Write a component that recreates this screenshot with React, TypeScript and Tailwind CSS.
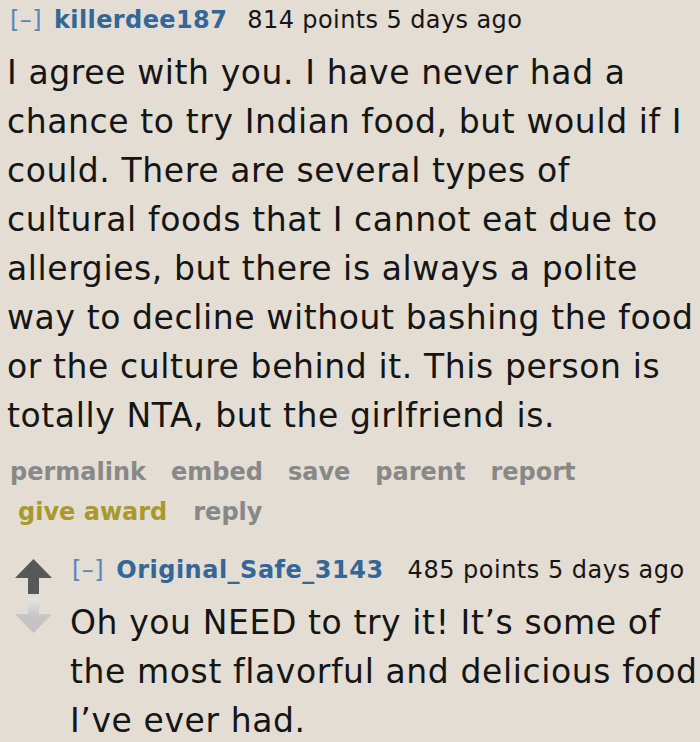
export default function App() {
  const font = { fontFamily: '"DejaVu Sans", Verdana, sans-serif' };
  return (
    <div className="w-[700px] h-[742px] overflow-hidden bg-[#e3ddd3] text-[#151515]" style={font}>
      <div className="pl-[8px] pt-[4px]">
        <div className="flex items-baseline text-[24px] leading-[32px] tracking-[0.4px] whitespace-nowrap">
          <span className="ml-[2px] text-[#5b86bb]">[–]</span>
          <span className="ml-[12px] font-bold text-[#336699]">killerdee187</span>
          <span className="ml-[20px]">814 points 5 days ago</span>
        </div>
        <p className="mt-[12px] text-[33px] leading-[49px] tracking-[0.6px] whitespace-nowrap -ml-[1px]">
          I agree with you. I have never had a<br />
          chance to try Indian food, but would if I<br />
          could. There are several types of<br />
          cultural foods that I cannot eat due to<br />
          allergies, but there is always a polite<br />
          way to decline without bashing the food<br />
          or the culture behind it. This person is<br />
          totally NTA, but the girlfriend is.
        </p>
        <div className="mt-[12px] text-[24px] font-bold leading-[40px] text-[#888888] whitespace-nowrap">
          <div className="flex gap-[25px] pl-[2px]">
            <span>permalink</span>
            <span>embed</span>
            <span>save</span>
            <span>parent</span>
            <span>report</span>
          </div>
          <div className="flex gap-[26px] pl-[10px]">
            <span className="text-[#a8982e]">give award</span>
            <span>reply</span>
          </div>
        </div>
      </div>
      <div className="flex mt-[22px] pl-[15px]">
        <div className="flex flex-col gap-[4px] pt-[5px] w-[37px]">
          <svg width="37" height="35" viewBox="0 0 37 35">
            <path d="M18.5 0 L37 19 L24 19 L24 35 L13 35 L13 19 L0 19 Z" fill="#585858" />
          </svg>
          <svg width="37" height="35" viewBox="0 0 37 35">
            <defs>
              <linearGradient id="dg" x1="0" y1="0" x2="0" y2="1">
                <stop offset="0" stopColor="#e6e6e6" />
                <stop offset="0.5" stopColor="#c6c6c6" />
                <stop offset="1" stopColor="#c0c0c0" />
              </linearGradient>
            </defs>
            <path d="M13 0 L24 0 L24 16 L37 16 L18.5 35 L0 16 L13 16 Z" fill="url(#dg)" />
          </svg>
        </div>
        <div className="ml-[18px] flex-1">
          <div className="flex items-baseline text-[24px] leading-[32px] tracking-[0.5px] whitespace-nowrap">
            <span className="ml-[2px] text-[#5b86bb]">[–]</span>
            <span className="ml-[12px] font-bold text-[#336699]">Original_Safe_3143</span>
            <span className="ml-[24px]">485 points 5 days ago</span>
          </div>
          <p className="mt-[12px] text-[33px] leading-[49px] tracking-[0.6px] whitespace-nowrap">
            Oh you NEED to try it! It’s some of<br />
            the most flavorful and delicious food<br />
            I’ve ever had.
          </p>
        </div>
      </div>
    </div>
  );
}
